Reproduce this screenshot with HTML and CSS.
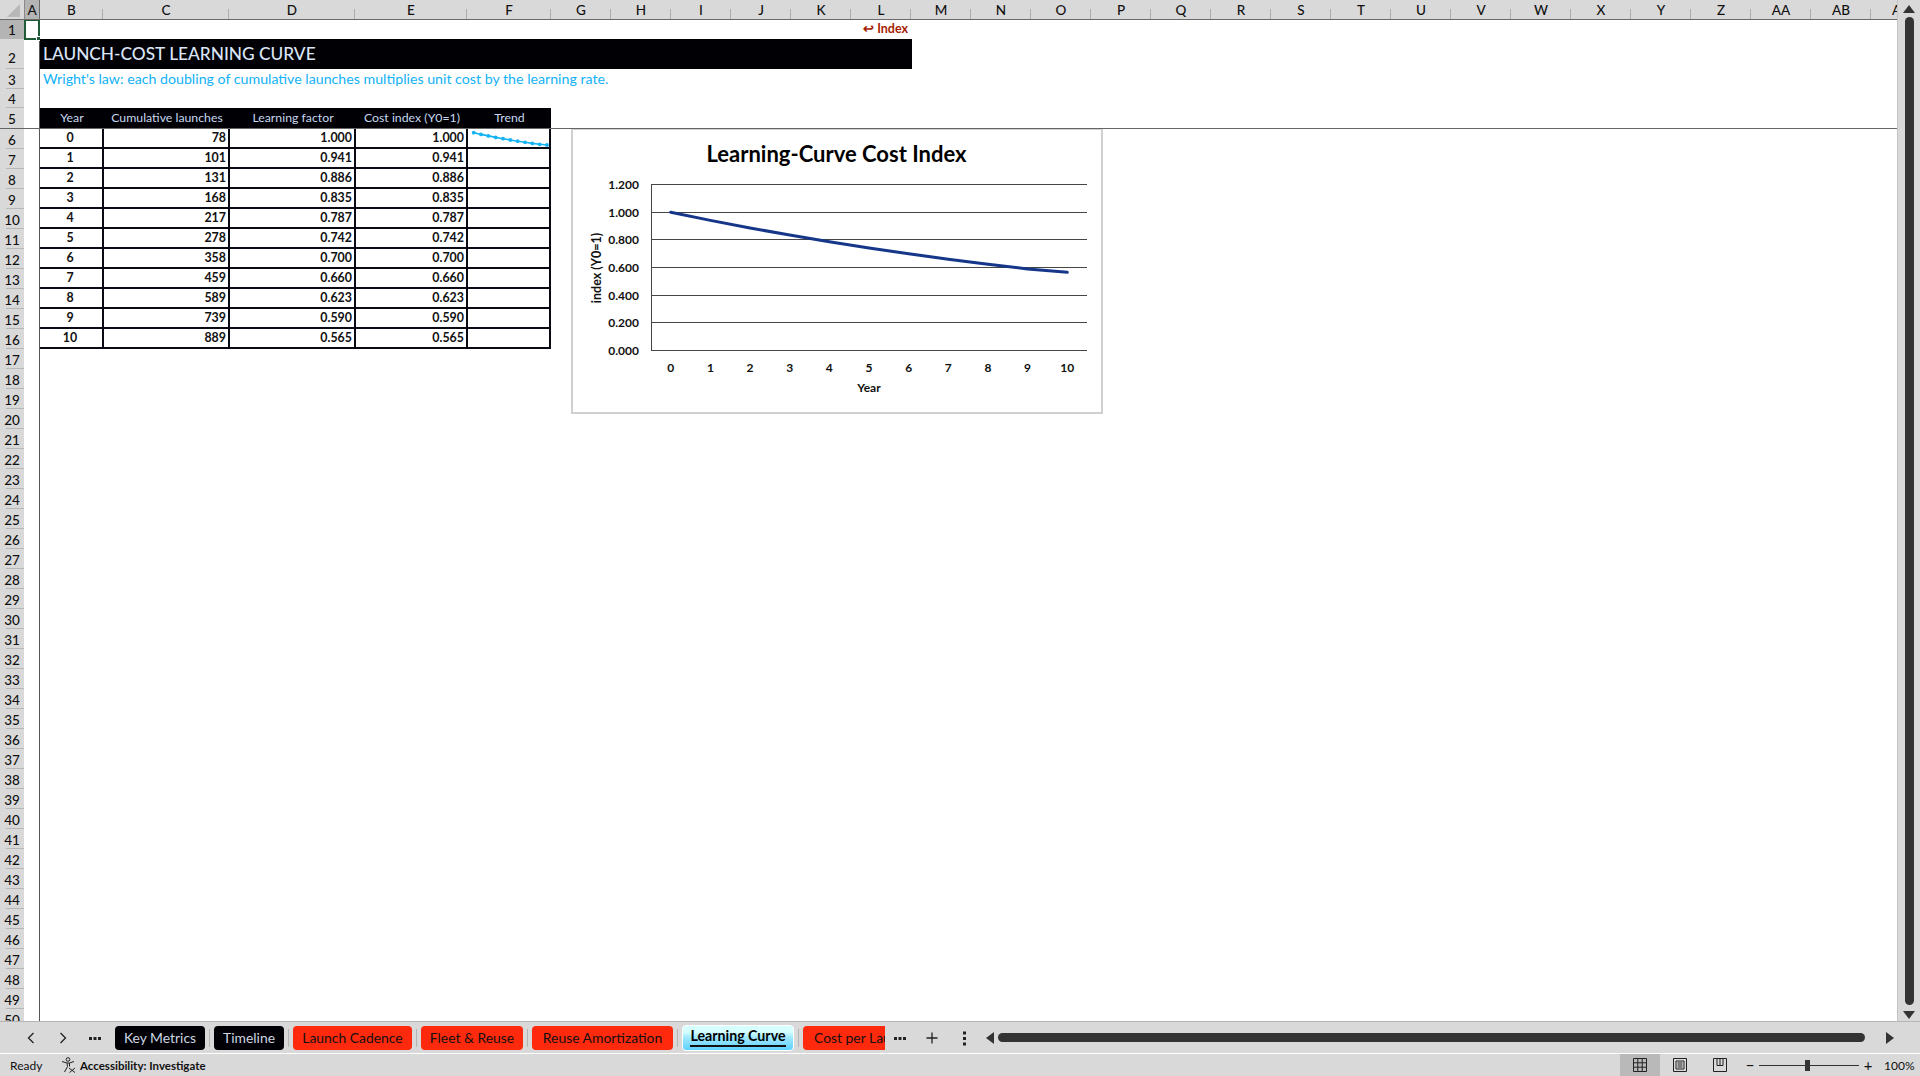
FILE: index.html
```html
<!DOCTYPE html>
<html lang="en">
<head>
    <meta charset="UTF-8">
    <title>Learning Curve - Workbook</title>
    <link rel="stylesheet" href="styles.css">
</head>
<body>
    <div class="app">
        <div class="workbook">
            <div class="sheet">
                <div class="col-headers">
                    <div class="corner"><span class="corner-mark"></span></div>
                    <div class="ch ch-a selected">A</div>
                    <div class="ch ch-b">B</div>
                    <div class="ch ch-c">C</div>
                    <div class="ch ch-d">D</div>
                    <div class="ch ch-e">E</div>
                    <div class="ch ch-f">F</div>
                    <div class="ch">G</div><div class="ch">H</div><div class="ch">I</div><div class="ch">J</div>
                    <div class="ch">K</div><div class="ch">L</div><div class="ch">M</div><div class="ch">N</div>
                    <div class="ch">O</div><div class="ch">P</div><div class="ch">Q</div><div class="ch">R</div>
                    <div class="ch">S</div><div class="ch">T</div><div class="ch">U</div><div class="ch">V</div>
                    <div class="ch">W</div><div class="ch">X</div><div class="ch">Y</div><div class="ch">Z</div>
                    <div class="ch">AA</div><div class="ch">AB</div>
                    <div class="ch ch-last">AC</div>
                </div>
                <div class="sheet-body">
                    <div class="row-headers">
                        <div class="rh rh-short selected">1</div>
                        <div class="rh rh-tall">2</div>
                        <div class="rh">3</div><div class="rh rh-short">4</div><div class="rh rh-head">5</div><div class="rh">6</div>
                        <div class="rh">7</div><div class="rh">8</div><div class="rh">9</div><div class="rh">10</div>
                        <div class="rh">11</div><div class="rh">12</div><div class="rh">13</div><div class="rh">14</div>
                        <div class="rh">15</div><div class="rh">16</div><div class="rh">17</div><div class="rh">18</div>
                        <div class="rh">19</div><div class="rh">20</div><div class="rh">21</div><div class="rh">22</div>
                        <div class="rh">23</div><div class="rh">24</div><div class="rh">25</div><div class="rh">26</div>
                        <div class="rh">27</div><div class="rh">28</div><div class="rh">29</div><div class="rh">30</div>
                        <div class="rh">31</div><div class="rh">32</div><div class="rh">33</div><div class="rh">34</div>
                        <div class="rh">35</div><div class="rh">36</div><div class="rh">37</div><div class="rh">38</div>
                        <div class="rh">39</div><div class="rh">40</div><div class="rh">41</div><div class="rh">42</div>
                        <div class="rh">43</div><div class="rh">44</div><div class="rh">45</div><div class="rh">46</div>
                        <div class="rh">47</div><div class="rh">48</div><div class="rh">49</div><div class="rh">50</div>
                    </div>
                    <div class="col-a">
                        <div class="active-cell"><span class="fill-handle"></span></div>
                    </div>
                    <div class="canvas">
                        <div class="index-row"><span class="index-link">&#8617; Index</span></div>
                        <div class="title-row">LAUNCH-COST LEARNING CURVE</div>
                        <div class="note-row">Wright's law: each doubling of cumulative launches multiplies unit cost by the learning rate.</div>
                        <div class="blank-row"></div>

                        <table class="data">
                            <thead>
                                <tr>
                                    <th class="col-year">Year</th>
                                    <th class="col-launches">Cumulative launches</th>
                                    <th class="col-factor">Learning factor</th>
                                    <th class="col-cost">Cost index (Y0=1)</th>
                                    <th class="col-trend">Trend</th>
                                </tr>
                            </thead>
                            <tbody>
                                <tr>
                                    <td class="year">0</td><td>78</td><td>1.000</td><td>1.000</td>
                                    <td class="trend">
                                        <svg class="spark" width="82" height="18" viewBox="0 0 82 18">
                                            <polyline points="4.7,3.7 12,5.4 19.4,6.9 26.7,8.4 34,9.7 41.4,11 48.7,12.2 56,13.3 63.3,14.4 70.7,15.3 78,16"/>
                                            <g>
                                                <circle cx="4.7" cy="3.7" r="1.9"/><circle cx="12" cy="5.4" r="1.9"/>
                                                <circle cx="19.4" cy="6.9" r="1.9"/><circle cx="26.7" cy="8.4" r="1.9"/>
                                                <circle cx="34" cy="9.7" r="1.9"/><circle cx="41.4" cy="11" r="1.9"/>
                                                <circle cx="48.7" cy="12.2" r="1.9"/><circle cx="56" cy="13.3" r="1.9"/>
                                                <circle cx="63.3" cy="14.4" r="1.9"/><circle cx="70.7" cy="15.3" r="1.9"/>
                                                <circle cx="78" cy="16" r="1.9"/>
                                            </g>
                                        </svg>
                                    </td>
                                </tr>
                                <tr><td class="year">1</td><td>101</td><td>0.941</td><td>0.941</td><td></td></tr>
                                <tr><td class="year">2</td><td>131</td><td>0.886</td><td>0.886</td><td></td></tr>
                                <tr><td class="year">3</td><td>168</td><td>0.835</td><td>0.835</td><td></td></tr>
                                <tr><td class="year">4</td><td>217</td><td>0.787</td><td>0.787</td><td></td></tr>
                                <tr><td class="year">5</td><td>278</td><td>0.742</td><td>0.742</td><td></td></tr>
                                <tr><td class="year">6</td><td>358</td><td>0.700</td><td>0.700</td><td></td></tr>
                                <tr><td class="year">7</td><td>459</td><td>0.660</td><td>0.660</td><td></td></tr>
                                <tr><td class="year">8</td><td>589</td><td>0.623</td><td>0.623</td><td></td></tr>
                                <tr><td class="year">9</td><td>739</td><td>0.590</td><td>0.590</td><td></td></tr>
                                <tr><td class="year">10</td><td>889</td><td>0.565</td><td>0.565</td><td></td></tr>
                            </tbody>
                        </table>

                        <!-- chart floats over the sheet -->
                        <div class="chart">
                            <svg width="532" height="285" viewBox="0 0 532 285">
                                <text class="chart-title" x="265.5" y="33">Learning-Curve Cost Index</text>
                                <g class="grid-lines">
                                    <line x1="80" x2="516" y1="55.5" y2="55.5"/>
                                    <line x1="80" x2="516" y1="83.5" y2="83.5"/>
                                    <line x1="80" x2="516" y1="110.5" y2="110.5"/>
                                    <line x1="80" x2="516" y1="138.5" y2="138.5"/>
                                    <line x1="80" x2="516" y1="166.5" y2="166.5"/>
                                    <line x1="80" x2="516" y1="193.5" y2="193.5"/>
                                    <line x1="80" x2="516" y1="221.5" y2="221.5"/>
                                    <line x1="80.5" x2="80.5" y1="55" y2="222"/>
                                </g>
                                <polyline class="curve" points="99.7,83.3 139.4,91.4 179,99 218.7,106.1 258.3,112.7 298,118.9 337.7,124.7 377.3,130.2 417,135.3 456.6,139.9 496.3,143.3"/>
                                <g class="y-labels">
                                    <text x="68" y="60">1.200</text>
                                    <text x="68" y="88">1.000</text>
                                    <text x="68" y="115">0.800</text>
                                    <text x="68" y="143">0.600</text>
                                    <text x="68" y="171">0.400</text>
                                    <text x="68" y="198">0.200</text>
                                    <text x="68" y="226">0.000</text>
                                </g>
                                <g class="x-labels">
                                    <text x="99.7" y="243">0</text>
                                    <text x="139.4" y="243">1</text>
                                    <text x="179" y="243">2</text>
                                    <text x="218.7" y="243">3</text>
                                    <text x="258.3" y="243">4</text>
                                    <text x="298" y="243">5</text>
                                    <text x="337.7" y="243">6</text>
                                    <text x="377.3" y="243">7</text>
                                    <text x="417" y="243">8</text>
                                    <text x="456.6" y="243">9</text>
                                    <text x="496.3" y="243">10</text>
                                    <text x="298" y="263">Year</text>
                                </g>
                                <text class="y-title" transform="translate(30,139) rotate(-90)">index (Y0=1)</text>
                            </svg>
                        </div>
                    </div>
                    <div class="freeze-line"></div>
                </div>
            </div>
            <div class="vscroll">
                <svg class="arrow-up" width="12" height="8" viewBox="0 0 12 8"><path d="M6 0 L12 8 L0 8 Z"/></svg>
                <div class="vthumb"></div>
                <svg class="arrow-down" width="12" height="8" viewBox="0 0 12 8"><path d="M0 0 L12 0 L6 8 Z"/></svg>
            </div>
        </div>

        <div class="tabbar">
            <div class="tab-nav">
                <svg width="32" height="32" viewBox="0 0 32 32"><path class="glyph" d="M18.500 11 L13.500 16 L18.500 21"/></svg>
                <svg width="32" height="32" viewBox="0 0 32 32"><path class="glyph" d="M13.500 11 L18.500 16 L13.500 21"/></svg>
                <svg width="32" height="32" viewBox="0 0 32 32"><path class="dots" d="M10 15h3v3h-3zM14.500 15h3v3h-3zM19 15h3v3h-3z"/></svg>
            </div>
            <div class="tabs">
                <div class="tab tab-dark tab-key">Key Metrics</div>
                <span class="tab-sep"></span>
                <div class="tab tab-dark tab-time">Timeline</div>
                <span class="tab-sep"></span>
                <div class="tab tab-red tab-launch">Launch Cadence</div>
                <span class="tab-sep"></span>
                <div class="tab tab-red tab-fleet">Fleet &amp; Reuse</div>
                <span class="tab-sep"></span>
                <div class="tab tab-red tab-reuse">Reuse Amortization</div>
                <span class="tab-sep"></span>
                <div class="tab tab-active"><span>Learning Curve</span></div>
                <span class="tab-sep"></span>
                <div class="tab tab-red tab-cost">Cost per Launch</div>
            </div>
            <div class="tab-tools">
                <svg width="32" height="32" viewBox="0 0 32 32"><path class="dots" d="M10 15h3v3h-3zM14.500 15h3v3h-3zM19 15h3v3h-3z"/></svg>
                <svg width="32" height="32" viewBox="0 0 32 32"><path class="glyph" d="M16 10.500 V21.500 M10.500 16 H21.500"/></svg>
                <svg width="32" height="32" viewBox="0 0 32 32"><path class="dots" d="M15 9.500h3v3h-3zM15 15h3v3h-3zM15 20.500h3v3h-3z"/></svg>
            </div>
            <div class="hscroll">
                <svg width="8" height="12" viewBox="0 0 8 12"><path d="M8 0 V12 L0 6 Z"/></svg>
                <div class="hthumb"></div>
                <svg width="8" height="12" viewBox="0 0 8 12"><path d="M0 0 V12 L8 6 Z"/></svg>
            </div>
        </div>

        <div class="statusbar">
            <span class="ready">Ready</span>
            <svg class="a11y-icon" width="16" height="16" viewBox="0 0 16 16">
                <circle cx="7" cy="2.500" r="1.800"/>
                <path d="M1 4.500 L6 6 H8.500 L13 4.500 M6 6 L6.500 9.500 L3.500 15 M8.500 6 V9.500 M8 11 L14 15.500 M14 11 L8.500 15.500"/>
            </svg>
            <span class="a11y-text">Accessibility: Investigate</span>
            <div class="status-right">
                <div class="view-btn on">
                    <svg width="14" height="14" viewBox="0 0 14 14"><path d="M.5 .5h13v13H.5z M.5 4.800h13 M.5 9.200h13 M4.800 .5v13 M9.200 .5v13"/></svg>
                </div>
                <div class="view-btn">
                    <svg width="14" height="14" viewBox="0 0 14 14"><path d="M.5 .5h13v13H.5z M3 3h8v8H3z M4.500 5h5 M4.500 7h5 M4.500 9h5"/></svg>
                </div>
                <div class="view-btn">
                    <svg width="14" height="14" viewBox="0 0 14 14"><path d="M.5 .5h13v13H.5z M4 .5v7h6v-7 M7 .5v7"/></svg>
                </div>
                <div class="zoom-box">
                    <span class="zoom-sign">&minus;</span>
                    <div class="zoom-track"><span class="zoom-thumb"></span></div>
                    <span class="zoom-sign">+</span>
                </div>
                <span class="zoom-pct">100%</span>
            </div>
        </div>
    </div>
</body>
</html>
```

FILE: styles.css
```css
* {
    box-sizing: border-box;
    margin: 0;
    padding: 0;
}

html, body {
    height: 100%;
    overflow: hidden;
}

body {
    background-color: #d9d9d9;
    font-family: 'Lato', 'Liberation Sans', sans-serif;
    color: #000;
}

.app {
    display: flex;
    flex-direction: column;
    height: 100vh;
}

.workbook {
    display: flex;
    height: 1022px;
    border-bottom: 1px solid #b5b5b5;
}

.sheet {
    flex: 1;
    display: flex;
    flex-direction: column;
    overflow: hidden;
    border-right: 1px solid #c4c4c4;
}

/* column headers */
.col-headers {
    display: flex;
    flex: none;
    height: 20px;
    background-color: #d9d9d9;
    border-bottom: 1px solid #6a6a6a;
    overflow: hidden;
}

.corner {
    flex: none;
    width: 24px;
    position: relative;
}

.corner-mark {
    position: absolute;
    right: 4px;
    bottom: 2px;
    width: 0;
    height: 0;
    border-left: 13px solid transparent;
    border-bottom: 13px solid #b8b8b8;
}

.ch {
    flex: none;
    width: 60px;
    font-size: 13.5px;
    font-weight: 500;
    line-height: 21px;
    text-align: center;
    color: #111;
    background-image: linear-gradient(#adadad, #adadad);
    background-repeat: no-repeat;
    background-position: right bottom;
    background-size: 1px 10px;
}

.ch-a { width: 16px; }
.ch-b { width: 63px; }
.ch-c { width: 126px; }
.ch-d { width: 126px; }
.ch-e { width: 112px; }
.ch-f { width: 84px; }
.ch-last { width: 60px; }

.ch.selected {
    background-color: #b4b4b4;
    background-image: none;
    border-left: 1px solid #8a8a8a;
    border-right: 1px solid #6a6a6a;
}

/* row headers + cells */
.sheet-body {
    flex: 1;
    display: flex;
    position: relative;
    overflow: hidden;
}

.row-headers {
    flex: none;
    width: 24px;
    background-color: #d9d9d9;
}

.rh {
    height: 20px;
    font-size: 13.5px;
    font-weight: 500;
    line-height: 22px;
    text-align: center;
    color: #111;
    background-image: linear-gradient(#b8b8b8, #b8b8b8);
    background-repeat: no-repeat;
    background-position: right bottom;
    background-size: 18px 1px;
}

.rh-short {
    height: 19px;
    line-height: 20px;
}

.rh-tall {
    height: 30px;
    line-height: 38px;
}

.rh-head {
    height: 21px;
}

.rh.selected {
    background-color: #b4b4b4;
    background-image: none;
}

.col-a {
    flex: none;
    width: 16px;
    background-color: #fff;
    border-right: 1px solid #555;
    position: relative;
}

.active-cell {
    position: absolute;
    left: 0;
    top: -1px;
    width: 16px;
    height: 21px;
    border: 2px solid #1e5c38;
}

.fill-handle {
    position: absolute;
    right: -3px;
    bottom: -3px;
    width: 5px;
    height: 5px;
    background-color: #1e5c38;
    border: 1px solid #fff;
}

.canvas {
    flex: 1;
    position: relative;
    background-color: #fff;
}

.freeze-line {
    position: absolute;
    left: 0;
    right: 0;
    top: 108px;
    height: 1px;
    background-color: #666;
}

.index-row {
    width: 871px;
    height: 19px;
    text-align: right;
    padding-right: 3px;
}

.index-link {
    display: block;
    font-size: 12.5px;
    font-weight: 700;
    line-height: 18px;
    color: #a61c00;
}

.title-row {
    width: 872px;
    height: 30px;
    padding: 2px 0 0 3px;
    background-color: #000005;
    color: #dbe5f5;
    font-size: 17.3px;
    line-height: 26px;
    font-weight: 500;
}

.note-row {
    height: 20px;
    padding-left: 3px;
    color: #12b2f8;
    font-size: 14.2px;
    line-height: 20px;
}

.blank-row {
    height: 19px;
}

/* table */
.data {
    border-spacing: 0;
    table-layout: fixed;
    width: 511px;
    font-size: 12.4px;
}

.data th {
    height: 21px;
    background-color: #000005;
    color: #c6d9f0;
    font-weight: 400;
    font-size: 12.3px;
    text-align: center;
    padding-bottom: 3px;
}

.col-year { width: 64px; }
.col-launches { width: 126px; }
.col-factor { width: 126px; }
.col-cost { width: 112px; }
.col-trend { width: 83px; }

.data td {
    height: 20px;
    padding: 0 2px 0 0;
    line-height: 18px;
    font-weight: 700;
    text-align: right;
    color: #111;
    border-right: 2px solid #0a0a14;
    border-bottom: 2px solid #0a0a14;
}

.data td.year {
    text-align: center;
}

.data td.trend {
    padding: 0;
}

.spark {
    display: block;
    margin-left: 1px;
}

.spark polyline {
    fill: none;
    stroke: #14b4f4;
    stroke-width: 1.6;
}

.spark circle {
    fill: #14b4f4;
}

/* chart */
.chart {
    position: absolute;
    left: 531px;
    top: 109px;
    width: 532px;
    height: 285px;
    background-color: #fff;
    border: 2px solid #d0d0d0;
    border-top-width: 1px;
    overflow: hidden;
}

.chart svg {
    display: block;
    margin: -1px 0 0 -2px;
}

.chart text {
    font-family: 'Lato', 'Liberation Sans', sans-serif;
    font-weight: 700;
    fill: #111;
}

.chart .chart-title {
    font-size: 22px;
    text-anchor: middle;
    fill: #000;
}

.grid-lines line {
    stroke: #454545;
    stroke-width: 1;
}

.curve {
    fill: none;
    stroke: #16368a;
    stroke-width: 3;
    stroke-linejoin: round;
    stroke-linecap: round;
}

.y-labels text {
    font-size: 12px;
    text-anchor: end;
}

.x-labels text {
    font-size: 12px;
    text-anchor: middle;
}

.chart .y-title {
    font-size: 12.5px;
    text-anchor: middle;
}

/* vertical scrollbar */
.vscroll {
    flex: none;
    width: 22px;
    position: relative;
    background-color: #d9d9d9;
}

.vscroll svg {
    position: absolute;
    left: 5px;
    fill: #333;
}

.arrow-up { top: 5px; }
.arrow-down { top: 1011px; }

.vthumb {
    position: absolute;
    left: 7px;
    top: 17px;
    width: 9px;
    height: 988px;
    border-radius: 5px;
    background-color: #333;
}

/* sheet tabs */
.tabbar {
    flex: none;
    display: flex;
    align-items: center;
    height: 32px;
    background-color: #d9d9d9;
    border-bottom: 1px solid #fff;
}

.tab-nav {
    flex: none;
    display: flex;
    width: 115px;
    padding-left: 15px;
}

.tab-tools {
    flex: none;
    display: flex;
    margin-left: -1px;
}

.tab-nav svg,
.tab-tools svg {
    display: block;
}

.glyph {
    fill: none;
    stroke: #222;
    stroke-width: 1.3;
}

.dots {
    fill: #222;
}

.tabs {
    flex: none;
    display: flex;
    align-items: center;
    width: 770px;
    height: 32px;
    overflow: hidden;
}

.tab {
    flex: none;
    height: 24px;
    border-radius: 4px;
    font-size: 13.9px;
    line-height: 24px;
    text-align: center;
    white-space: nowrap;
}

.tab-sep {
    flex: none;
    width: 1px;
    height: 18px;
    margin: 0 4px;
    background-color: #b4b4b4;
}

.tab-dark {
    background-color: #000005;
    color: #cdd6e2;
}

.tab-red {
    background-color: #ff2a0d;
    color: #111;
}

.tab-key { width: 90px; }
.tab-time { width: 70px; }
.tab-launch { width: 119px; }
.tab-fleet { width: 102px; }
.tab-reuse { width: 141px; }

.tab-cost {
    width: 120px;
    text-align: left;
    padding-left: 11px;
    border-radius: 4px 0 0 4px;
}

.tab-active {
    width: 112px;
    height: 26px;
    font-weight: 700;
    font-size: 14.2px;
    line-height: 20px;
    border: 1px solid #fff;
    background: linear-gradient(#d6ffff 0, #d6ffff 25%, #a4eaff 45%, #7edcff 75%, #5ed2ff 100%);
}

.tab-active span {
    display: inline-block;
    border-bottom: 2px solid #111;
    line-height: 19px;
}

.hscroll {
    flex: 1;
    display: flex;
    align-items: center;
    gap: 4px;
    padding: 0 26px 0 6px;
}

.hscroll svg {
    flex: none;
    fill: #333;
}

.hscroll svg:last-child {
    margin-left: 17px;
}

.hthumb {
    flex: 1;
    height: 9px;
    border-radius: 5px;
    background-color: #333;
}

/* status bar */
.statusbar {
    flex: 1;
    display: flex;
    align-items: center;
    padding-left: 10px;
    background-color: #d9d9d9;
    font-size: 12px;
    color: #111;
}

.ready {
    width: 51px;
}

.a11y-icon {
    fill: none;
    stroke: #222;
    stroke-width: 1;
    margin-right: 3px;
}

.a11y-icon circle {
    fill: none;
}

.a11y-text {
    font-weight: 700;
    font-size: 11.5px;
}

.status-right {
    margin-left: auto;
    display: flex;
    align-items: center;
    height: 100%;
}

.view-btn {
    display: flex;
    align-items: center;
    justify-content: center;
    width: 40px;
    height: 100%;
}

.view-btn.on {
    background-color: #b9b9b9;
}

.view-btn svg {
    fill: none;
    stroke: #222;
    stroke-width: 1;
}

.zoom-box {
    display: flex;
    align-items: center;
    gap: 3px;
    margin-left: 4px;
}

.zoom-sign {
    width: 12px;
    text-align: center;
    font-size: 15px;
}

.zoom-track {
    width: 100px;
    height: 1px;
    background-color: #333;
    position: relative;
}

.zoom-thumb {
    position: absolute;
    left: 46px;
    top: -5px;
    width: 5px;
    height: 11px;
    background-color: #333;
}

.zoom-pct {
    width: 36px;
    margin-left: 10px;
    font-size: 12px;
}
```
